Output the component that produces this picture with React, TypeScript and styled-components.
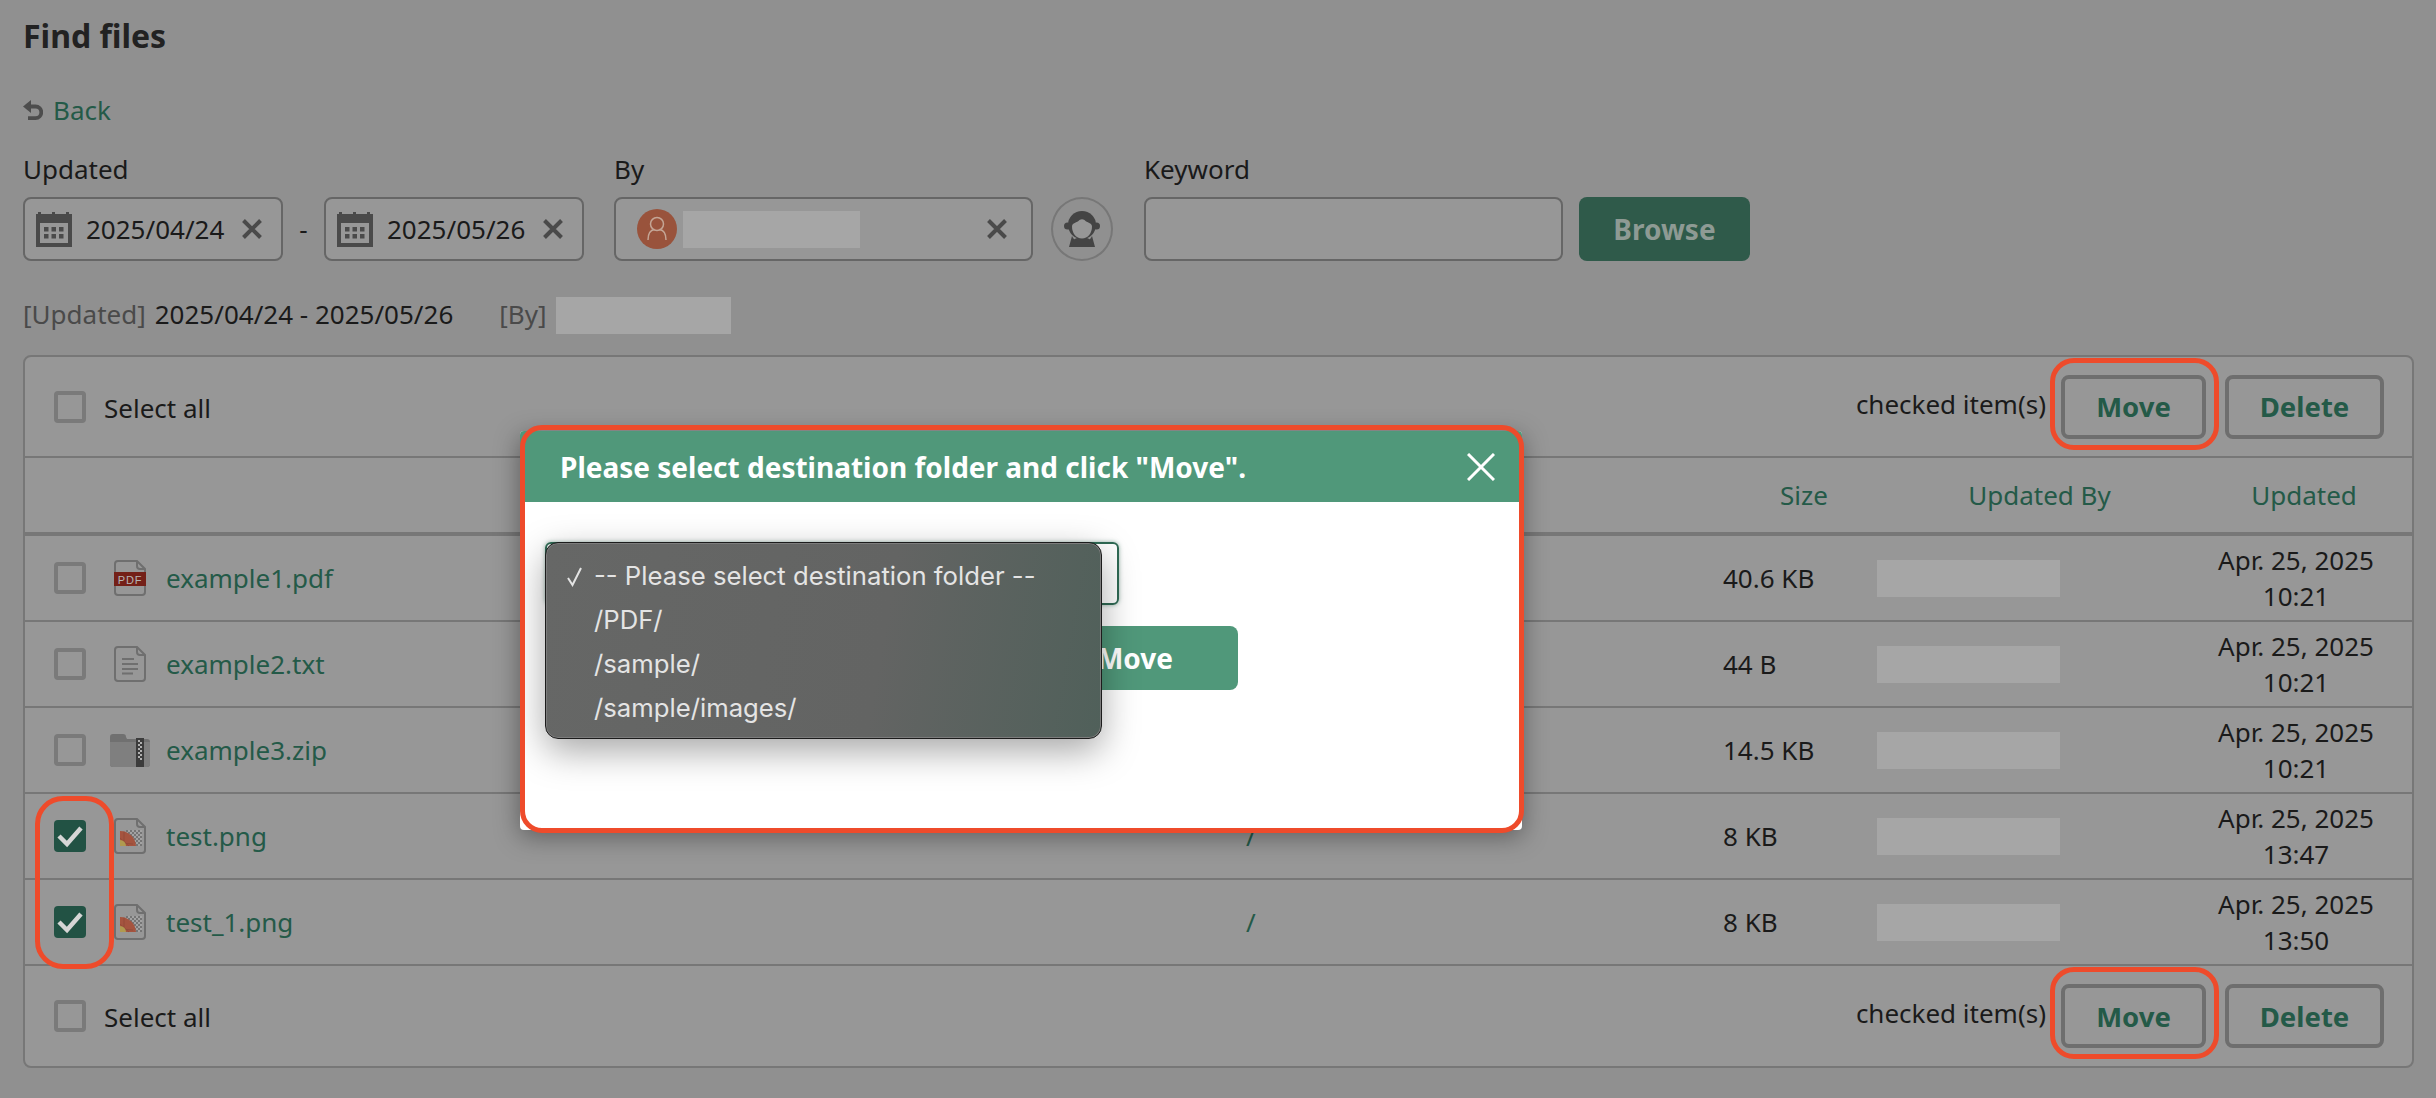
import React from "react";
import styled, { createGlobalStyle } from "styled-components";

const Global = createGlobalStyle`
  html, body { margin: 0; padding: 0; background: #909090; }
  body { font-family: "Noto Sans", "Open Sans", sans-serif; font-size: 26px; color: #1a1a1a; }
  * { box-sizing: border-box; }
`;

const GREEN = "#245a48";
const LINE = "#777777";
const REDACT = "#a6a6a6";
const RED = "#ee4b2b";

const Page = styled.div`
  position: relative;
  width: 2436px;
  height: 1098px;
  overflow: hidden;
  padding: 0 22px 0 23px;
  background: #909090;
`;
const Title = styled.h1`
  margin: 0;
  height: 70px;
  line-height: 71px;
  font-size: 32px;
  font-weight: 700;
  color: #222;
`;
const BackLink = styled.div`
  margin-top: 20px;
  height: 40px;
  line-height: 35px;
  display: flex;
  align-items: center;
  gap: 10px;
  color: ${GREEN};
`;
const Filters = styled.div`
  margin-top: 20px;
  display: flex;
  align-items: flex-end;
`;
const Group = styled.div<{ $ml?: number }>`
  margin-left: ${(p) => p.$ml ?? 0}px;
  display: flex;
  flex-direction: column;
`;
const Label = styled.div`
  height: 40px;
  line-height: 39px;
  margin-bottom: 7px;
`;
const Inline = styled.div`
  display: flex;
  align-items: center;
`;
const Field = styled.div<{ $w: number }>`
  width: ${(p) => p.$w}px;
  height: 64px;
  display: flex;
  align-items: center;
  border: 2px solid #666;
  border-radius: 8px;
  background: #979797;
`;
const DateField = styled(Field)`
  padding-left: 11px;
  gap: 14px;
`;
const UserField = styled(Field)`
  padding-left: 21px;
  justify-content: flex-start;
  gap: 6px;
`;
const ClearIcon = styled.svg<{ $pushed?: boolean }>`
  width: 22px;
  height: 22px;
  margin-left: ${(p) => (p.$pushed ? "auto" : "3px")};
  margin-right: ${(p) => (p.$pushed ? "23px" : "0")};
  flex: none;
`;
const Dash = styled.span`
  width: 41px;
  text-align: center;
`;
const Redact = styled.div<{ $w: number }>`
  width: ${(p) => p.$w}px;
  height: 37px;
  background: ${REDACT};
  flex: none;
`;
const PickUser = styled.div`
  margin-left: 18px;
  width: 62px;
  height: 64px;
  border: 2px solid #777;
  border-radius: 50%;
  display: flex;
  align-items: center;
  justify-content: center;
`;
const BrowseButton = styled.div`
  margin-left: 16px;
  width: 171px;
  height: 64px;
  border-radius: 8px;
  background: #2f5a4a;
  color: #8e9a94;
  font-weight: 700;
  font-size: 28px;
  display: flex;
  align-items: center;
  justify-content: center;
`;
const Summary = styled.div`
  margin-top: 36px;
  height: 37px;
  display: flex;
  align-items: center;
`;
const SummaryText = styled.span`
  margin-top: -3px;
`;
const SummaryKey = styled.span<{ $ml?: number }>`
  margin-left: ${(p) => p.$ml ?? 0}px;
  margin-top: -3px;
  color: #4a4a4a;
  margin-right: 9px;
`;
const Board = styled.div`
  position: relative;
  margin-top: 21px;
  width: 2391px;
  border: 2px solid ${LINE};
  border-radius: 8px;
  background: #979797;
`;
const Toolbar = styled.div<{ $bottom?: boolean }>`
  height: ${(p) => (p.$bottom ? 100 : 101)}px;
  padding: 0 28px 0 29px;
  display: flex;
  align-items: center;
  border-bottom: ${(p) => (p.$bottom ? "none" : `2px solid ${LINE}`)};
`;
const Box = styled.div<{ $checked?: boolean }>`
  width: 32px;
  height: 32px;
  flex: none;
  border-radius: 4px;
  border: ${(p) => (p.$checked ? "none" : "4px solid #7a7a7a")};
  background: ${(p) => (p.$checked ? "#225244" : "transparent")};
  display: flex;
  align-items: center;
  justify-content: center;
`;
const SelectAll = styled.div`
  margin-left: 18px;
  margin-top: 2px;
`;
const Spacer = styled.div`
  flex: 1;
`;
const CheckedText = styled.div`
  margin-right: 15px;
  margin-top: -6px;
`;
const ActionButton = styled.div<{ $w: number; $ringed?: boolean }>`
  position: relative;
  width: ${(p) => p.$w}px;
  height: 64px;
  border: 4px solid #6e6e6e;
  border-radius: 8px;
  display: flex;
  align-items: center;
  justify-content: center;
  font-weight: 700;
  font-size: 27.500px;
  color: ${GREEN};
  margin-left: ${(p) => (p.$ringed ? 0 : 19)}px;
  &::after {
    content: "";
    display: ${(p) => (p.$ringed ? "block" : "none")};
    position: absolute;
    left: -15px;
    right: -17px;
    top: -21px;
    bottom: -15px;
    border: 5px solid ${RED};
    border-radius: 24px;
  }
`;
const COLS = "89px 1132px 477px 154px 303px 232px";
const HeadRow = styled.div`
  height: 78px;
  display: grid;
  grid-template-columns: ${COLS};
  align-items: center;
  border-bottom: 4px solid ${LINE};
`;
const HeadCell = styled.div<{ $pl?: number }>`
  color: ${GREEN};
  text-align: center;
  padding-left: ${(p) => p.$pl ?? 0}px;
`;
const Row = styled.div`
  height: 86px;
  display: grid;
  grid-template-columns: ${COLS};
  align-items: center;
  border-bottom: 2px solid ${LINE};
`;
const CheckCell = styled.div`
  padding-left: 29px;
`;
const NameCell = styled.div`
  display: flex;
  align-items: center;
  color: ${GREEN};
`;
const IconSlot = styled.div`
  width: 32px;
  margin-right: 20px;
  display: flex;
  justify-content: center;
  flex: none;
  & > svg {
    flex: none;
  }
`;
const PathCell = styled.div`
  color: ${GREEN};
`;
const DateCell = styled.div`
  text-align: center;
  line-height: 36px;
`;
const Ring = styled.div`
  position: absolute;
  left: 10px;
  top: 439px;
  width: 79px;
  height: 173px;
  border: 5px solid ${RED};
  border-radius: 28px;
`;
const Modal = styled.div`
  position: absolute;
  left: 520px;
  top: 431px;
  width: 1002px;
  height: 399px;
  background: #fff;
  border-radius: 4px;
  overflow: hidden;
  box-shadow: 0 6px 26px rgba(0, 0, 0, 0.4);
`;
const ModalRing = styled.div`
  position: absolute;
  left: 520px;
  top: 425px;
  width: 1004px;
  height: 408px;
  border: 5px solid ${RED};
  border-radius: 22px;
`;
const ModalHead = styled.div`
  height: 71px;
  background: #50987a;
  color: #fff;
  font-weight: 700;
  font-size: 28px;
  display: flex;
  align-items: center;
  justify-content: space-between;
  padding: 0 27px 0 40px;
`;
const ModalBody = styled.div`
  position: relative;
  padding: 40px 0 0 25px;
`;
const FolderSelect = styled.div`
  width: 574px;
  height: 63px;
  border: 2px solid #2f6a54;
  border-radius: 6px;
  box-shadow: 0 0 4px rgba(47, 106, 84, 0.5);
`;
const MoveSubmit = styled.div`
  margin: 21px 0 0 487px;
  width: 206px;
  height: 64px;
  background: #50987a;
  border-radius: 8px;
  color: #fff;
  font-weight: 700;
  font-size: 28px;
  display: flex;
  align-items: center;
  justify-content: center;
`;
const Menu = styled.div`
  position: absolute;
  left: 25px;
  top: 40px;
  width: 557px;
  height: 197px;
  padding: 11px 0;
  border: 1px solid #1c1c1c;
  border-radius: 13px;
  background: linear-gradient(100deg, #666766 0%, #636463 60%, #50605a 100%);
  box-shadow: inset 0 0 0 1px #7c7c7c, 0 12px 36px rgba(0, 0, 0, 0.35);
  font-family: "Inter", "Liberation Sans", sans-serif;
  font-size: 25.700px;
  color: #e4e4e4;
`;
const MenuItem = styled.div`
  position: relative;
  height: 44px;
  line-height: 44px;
  padding-left: 48px;
`;
const Tick = styled.svg`
  position: absolute;
  left: 20px;
  top: 13px;
`;

const X = ({ pushed }: { pushed?: boolean }) => (
  <ClearIcon viewBox="0 0 22 22" $pushed={pushed}>
    <path d="M2.5 2.5 19.5 19.5M19.5 2.5 2.5 19.5" stroke="#4a4a4a" strokeWidth="4" fill="none" />
  </ClearIcon>
);
const Calendar = () => (
  <svg width="36" height="36" viewBox="0 0 36 36" style={{ flex: "none" }}>
    <path fill="#4a4a4a" d="M0 3h2V1h3v2h11V1h3v2h11V1h3v2h3v33H0z" />
    <rect x="4" y="12" width="28" height="20" fill="#979797" />
    {[8, 15.5, 23].map((x) =>
      [16, 23].map((y) => <rect key={`${x}-${y}`} x={x} y={y} width="4.5" height="4.5" fill="#4a4a4a" />)
    )}
  </svg>
);
const Undo = () => (
  <svg width="20" height="20" viewBox="0 0 20 20">
    <path d="M0 6.500 8 0v13z" fill="#4d4d4d" />
    <path d="M6 6.500h6.500a5.800 5.800 0 0 1 0 11.600H5" stroke="#4d4d4d" strokeWidth="3.800" fill="none" />
  </svg>
);
const Avatar = () => (
  <svg width="40" height="40" viewBox="0 0 40 40" style={{ flex: "none" }}>
    <circle cx="20" cy="20" r="20" fill="#99533c" />
    <circle cx="20" cy="15" r="6.500" fill="none" stroke="#c4a595" strokeWidth="1.500" />
    <path d="M11 31c0-7 3-10 6.500-10.500M29 31c0-7-3-10-6.500-10.500" fill="none" stroke="#c4a595" strokeWidth="1.500" />
  </svg>
);
const HairPerson = () => (
  <svg width="36" height="36" viewBox="0 0 36 36">
    <ellipse cx="18" cy="14" rx="14" ry="14" fill="#444" />
    <circle cx="3.500" cy="15" r="3.500" fill="#444" />
    <circle cx="32.500" cy="15" r="3.500" fill="#444" />
    <path d="M8 25c2 4 5 6 10 6s8-2 10-6l3 11H5z" fill="#444" />
    <path d="M8 36c-2-3 0-7 5-9h10c5 2 7 6 5 9z" fill="#444" />
    <path d="M8 15.500C8 11.500 13 12 15.500 9 Q18 7.500 20.500 9 C23 12 28 11.500 28 15.500 C28 22 24 27.500 18 27.500 C12 27.500 8 22 8 15.500Z" fill="#979797" />
  </svg>
);
const Sheet = ({ children }: { children?: React.ReactNode }) => (
  <svg width="32" height="36" viewBox="0 0 32 36">
    <path d="M4 1h19l8 8v23a3 3 0 0 1-3 3H4a3 3 0 0 1-3-3V4a3 3 0 0 1 3-3z" fill="none" stroke="#6f6f6f" strokeWidth="2" />
    <path d="M23 1v5a3 3 0 0 0 3 3h5" fill="none" stroke="#6f6f6f" strokeWidth="2" />
    {children}
  </svg>
);
const PdfIcon = () => (
  <Sheet>
    <rect x="0" y="12" width="32" height="14" fill="#742018" />
    <text x="16" y="23.500" textAnchor="middle" fontSize="11" fontFamily="Liberation Sans, sans-serif" letterSpacing="0.8" fill="#b5b5b5">PDF</text>
  </Sheet>
);
const TxtIcon = () => (
  <Sheet>
    <path d="M8 13h12M8 18h16M8 23h16M8 27.500h11" stroke="#6f6f6f" strokeWidth="2" />
  </Sheet>
);
const PngIcon = () => (
  <Sheet>
    <defs>
      <pattern id="chk" width="4" height="4" patternUnits="userSpaceOnUse">
        <rect width="4" height="4" fill="#a3a3a3" />
        <rect width="2" height="2" fill="#757575" />
        <rect x="2" y="2" width="2" height="2" fill="#757575" />
      </pattern>
    </defs>
    <rect x="12" y="12" width="16" height="16" fill="url(#chk)" />
    <path d="M6 28V13a16 16 0 0 1 16 15z" fill="#a5543f" />
    <path d="M10 13.500v14M6 20l9 8M6 25l13 1" stroke="#8f4a38" strokeWidth="0.800" />
    <path d="M6 28v-6a6 6 0 0 1 6 6z" fill="#b09a50" />
  </Sheet>
);
const ZipIcon = () => (
  <svg width="40" height="33" viewBox="0 0 40 33">
    <path d="M0 3a3 3 0 0 1 3-3h10a3 3 0 0 1 3 3l1 2h20a3 3 0 0 1 3 3v22a3 3 0 0 1-3 3H3a3 3 0 0 1-3-3z" fill="#707070" />
    <path d="M0 8h40v22a3 3 0 0 1-3 3H3a3 3 0 0 1-3-3z" fill="#7f7f7f" />
    <rect x="26" y="4" width="8" height="29" fill="#3c3c3c" />
    {[6, 10, 14, 18, 22].map((y) => (
      <g key={y}>
        <rect x="28" y={y} width="2" height="2" fill="#b0b0b0" />
        <rect x="30" y={y + 2} width="2" height="2" fill="#b0b0b0" />
      </g>
    ))}
  </svg>
);
const Check = () => (
  <svg width="28" height="24" viewBox="0 0 28 24">
    <path d="M3 12l8 8L25 4" fill="none" stroke="#d6d6d6" strokeWidth="4.500" />
  </svg>
);

type FileRow = { name: string; icon: React.ReactNode; path: string; size: string; date: string; time: string; checked?: boolean };
const files: FileRow[] = [
  { name: "example1.pdf", icon: <PdfIcon />, path: "", size: "40.6 KB", date: "Apr. 25, 2025", time: "10:21" },
  { name: "example2.txt", icon: <TxtIcon />, path: "", size: "44 B", date: "Apr. 25, 2025", time: "10:21" },
  { name: "example3.zip", icon: <ZipIcon />, path: "", size: "14.5 KB", date: "Apr. 25, 2025", time: "10:21" },
  { name: "test.png", icon: <PngIcon />, path: "/", size: "8 KB", date: "Apr. 25, 2025", time: "13:47", checked: true },
  { name: "test_1.png", icon: <PngIcon />, path: "/", size: "8 KB", date: "Apr. 25, 2025", time: "13:50", checked: true },
];

const Bar = ({ bottom }: { bottom?: boolean }) => (
  <Toolbar $bottom={bottom}>
    <Box />
    <SelectAll>Select all</SelectAll>
    <Spacer />
    <CheckedText>checked item(s)</CheckedText>
    <ActionButton $w={145} $ringed>Move</ActionButton>
    <ActionButton $w={159}>Delete</ActionButton>
  </Toolbar>
);

export default function App() {
  return (
    <Page>
      <Global />
      <Title>Find files</Title>
      <BackLink><Undo />Back</BackLink>
      <Filters>
        <Group>
          <Label>Updated</Label>
          <Inline>
            <DateField $w={260}><Calendar />2025/04/24<X /></DateField>
            <Dash>-</Dash>
            <DateField $w={260}><Calendar />2025/05/26<X /></DateField>
          </Inline>
        </Group>
        <Group $ml={30}>
          <Label>By</Label>
          <UserField $w={419}><Avatar /><Redact $w={177} /><X pushed /></UserField>
        </Group>
        <PickUser><HairPerson /></PickUser>
        <Group $ml={31}>
          <Label>Keyword</Label>
          <Field $w={419} />
        </Group>
        <BrowseButton>Browse</BrowseButton>
      </Filters>
      <Summary>
        <SummaryKey>[Updated]</SummaryKey>
        <SummaryText>2025/04/24 - 2025/05/26</SummaryText>
        <SummaryKey $ml={46}>[By]</SummaryKey>
        <Redact $w={175} />
      </Summary>
      <Board>
        <Bar />
        <HeadRow>
          <div />
          <div />
          <div />
          <HeadCell $pl={8}>Size</HeadCell>
          <HeadCell $pl={22}>Updated By</HeadCell>
          <HeadCell $pl={16}>Updated</HeadCell>
        </HeadRow>
        {files.map((f) => (
          <Row key={f.name}>
            <CheckCell><Box $checked={f.checked}>{f.checked && <Check />}</Box></CheckCell>
            <NameCell><IconSlot>{f.icon}</IconSlot>{f.name}</NameCell>
            <PathCell>{f.path}</PathCell>
            <div>{f.size}</div>
            <Redact $w={183} />
            <DateCell>{f.date}<br />{f.time}</DateCell>
          </Row>
        ))}
        <Bar bottom />
        <Ring />
      </Board>
      <Modal>
        <ModalHead>
          Please select destination folder and click "Move".
          <svg width="28" height="28" viewBox="0 0 28 28">
            <path d="M1 1 27 27M27 1 1 27" stroke="#fff" strokeWidth="3" />
          </svg>
        </ModalHead>
        <ModalBody>
          <FolderSelect />
          <MoveSubmit>Move</MoveSubmit>
          <Menu>
            <MenuItem>
              <Tick width="18" height="20" viewBox="0 0 18 20"><path d="M2 11l4.500 7L15 1" fill="none" stroke="#e4e4e4" strokeWidth="2" /></Tick>
              -- Please select destination folder --
            </MenuItem>
            <MenuItem>/PDF/</MenuItem>
            <MenuItem>/sample/</MenuItem>
            <MenuItem>/sample/images/</MenuItem>
          </Menu>
        </ModalBody>
      </Modal>
      <ModalRing />
    </Page>
  );
}
